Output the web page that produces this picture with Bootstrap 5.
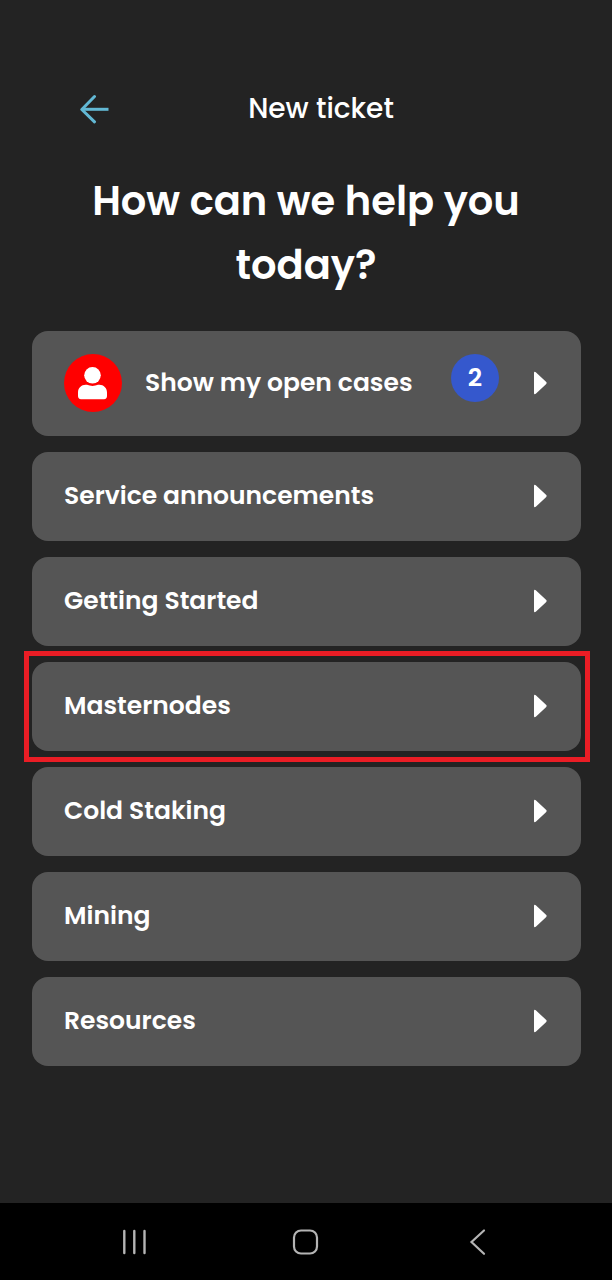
<!DOCTYPE html>
<html lang="en">
<head>
<meta charset="utf-8">
<meta name="viewport" content="width=device-width, initial-scale=1">
<title>New ticket</title>
<link href="https://cdn.jsdelivr.net/npm/bootstrap@5.3.0/dist/css/bootstrap.min.css" rel="stylesheet">
<style>
  body { background: #232323; color: #fff; font-family: Poppins, Inter, "Noto Sans", sans-serif; }
  .top-bar { padding: 89px 80px 0; }
  .back-btn svg, .topic svg, .system-nav svg { display: block; }
  .top-title { font-size: 28px; line-height: 40px; font-weight: 500; }
  .question { font-size: 40px; line-height: 64px; font-weight: 600; padding: 40px 80px 0; margin-bottom: 34px; }
  .topics { gap: 16px; padding: 0 31px 0 32px; }
  .topic { min-height: 89px; padding: 23px 34px 24px 32px; border: 0; border-radius: 16px; background: #555; color: #fff; font-size: 25px; line-height: 32px; font-weight: 600; }
  .avatar { width: 58px; height: 58px; background: #f00; margin-right: 23px; }
  .count { width: 48px; height: 48px; background: #3558cd; margin-right: 34px; }
  .topic.highlight::after { content: ""; position: absolute; inset: -11px -9px -11px -8px; border: 5px solid #ea1d25; pointer-events: none; }
  .system-nav { height: 77px; background: #000; padding: 0 108px; }
</style>
</head>
<body>
<div class="d-flex flex-column min-vh-100">
  <header class="top-bar d-flex align-items-center">
    <button type="button" class="back-btn btn p-0 border-0" aria-label="Back">
      <svg width="30" height="30" viewBox="0 0 30 30" fill="none" stroke="#62b8d4" stroke-width="3" stroke-linecap="round" stroke-linejoin="round"><path d="M14.500 2.500 1.800 15.500l12.700 12.300"/><path d="M2 15.300h26.500" stroke-linecap="butt"/></svg>
    </button>
    <div class="top-title flex-fill text-center">New ticket</div>
  </header>
  <main class="flex-fill pb-5">
    <h1 class="question text-center">How can we help you today?</h1>
    <div class="topics d-flex flex-column">
      <button type="button" class="topic btn d-flex align-items-center text-start">
        <span class="avatar rounded-circle d-flex align-items-center justify-content-center flex-shrink-0">
          <svg width="30" height="34" viewBox="0 0 30 34" fill="#fff"><circle cx="14.500" cy="9.300" r="8.300"/><path d="M0 30v-3.500C0 22 3.500 18.800 7.500 18.800H9c3.500 1.500 7.500 1.500 11 0h1.500c4 0 7.500 3.200 7.500 7.700V30c0 2-1 3.200-3 3.200H3C1 33.200 0 32 0 30z"/></svg>
        </span>
        <span class="flex-fill">Show my open cases</span>
        <span class="count rounded-circle d-flex align-items-center justify-content-center align-self-start flex-shrink-0">2</span>
        <svg width="14" height="24" viewBox="0 0 14 24" fill="#fff" class="flex-shrink-0"><path d="M1 2q0-2 1.800-.8L13 10.800q1.300 1.200 0 2.400L2.800 22.800Q1 24 1 22z"/></svg>
      </button>
      <button type="button" class="topic btn d-flex align-items-center text-start"><span class="flex-fill">Service announcements</span><svg width="14" height="24" viewBox="0 0 14 24" fill="#fff"><path d="M1 2q0-2 1.800-.8L13 10.800q1.300 1.200 0 2.400L2.800 22.800Q1 24 1 22z"/></svg></button>
      <button type="button" class="topic btn d-flex align-items-center text-start"><span class="flex-fill">Getting Started</span><svg width="14" height="24" viewBox="0 0 14 24" fill="#fff"><path d="M1 2q0-2 1.800-.8L13 10.800q1.300 1.200 0 2.400L2.800 22.800Q1 24 1 22z"/></svg></button>
      <button type="button" class="topic highlight position-relative btn d-flex align-items-center text-start"><span class="flex-fill">Masternodes</span><svg width="14" height="24" viewBox="0 0 14 24" fill="#fff"><path d="M1 2q0-2 1.800-.8L13 10.800q1.300 1.200 0 2.400L2.800 22.800Q1 24 1 22z"/></svg></button>
      <button type="button" class="topic btn d-flex align-items-center text-start"><span class="flex-fill">Cold Staking</span><svg width="14" height="24" viewBox="0 0 14 24" fill="#fff"><path d="M1 2q0-2 1.800-.8L13 10.800q1.300 1.200 0 2.400L2.800 22.800Q1 24 1 22z"/></svg></button>
      <button type="button" class="topic btn d-flex align-items-center text-start"><span class="flex-fill">Mining</span><svg width="14" height="24" viewBox="0 0 14 24" fill="#fff"><path d="M1 2q0-2 1.800-.8L13 10.800q1.300 1.200 0 2.400L2.800 22.800Q1 24 1 22z"/></svg></button>
      <button type="button" class="topic btn d-flex align-items-center text-start"><span class="flex-fill">Resources</span><svg width="14" height="24" viewBox="0 0 14 24" fill="#fff"><path d="M1 2q0-2 1.800-.8L13 10.800q1.300 1.200 0 2.400L2.800 22.800Q1 24 1 22z"/></svg></button>
    </div>
  </main>
  <nav class="system-nav d-flex align-items-center justify-content-between" aria-label="System">
    <button type="button" class="btn p-0 border-0" aria-label="Recent apps"><svg width="52" height="28" viewBox="0 0 52 28" stroke="#b4b4b4" stroke-width="2.400" stroke-linecap="round"><path d="M16.300 3v22M26.300 3v22M36.500 3v22"/></svg></button>
    <button type="button" class="btn p-0 border-0" aria-label="Home"><svg width="52" height="28" viewBox="0 0 52 28" fill="none" stroke="#b4b4b4" stroke-width="2.200"><rect x="14" y="2.500" width="23" height="23" rx="7"/></svg></button>
    <button type="button" class="btn p-0 border-0" aria-label="Back"><svg width="52" height="28" viewBox="0 0 52 28" fill="none" stroke="#b4b4b4" stroke-width="2.200" stroke-linecap="round"><path d="M32 2.500 19.500 14 32 25.800"/></svg></button>
  </nav>
</div>
<script src="https://cdn.jsdelivr.net/npm/bootstrap@5.3.0/dist/js/bootstrap.bundle.min.js"></script>
</body>
</html>
